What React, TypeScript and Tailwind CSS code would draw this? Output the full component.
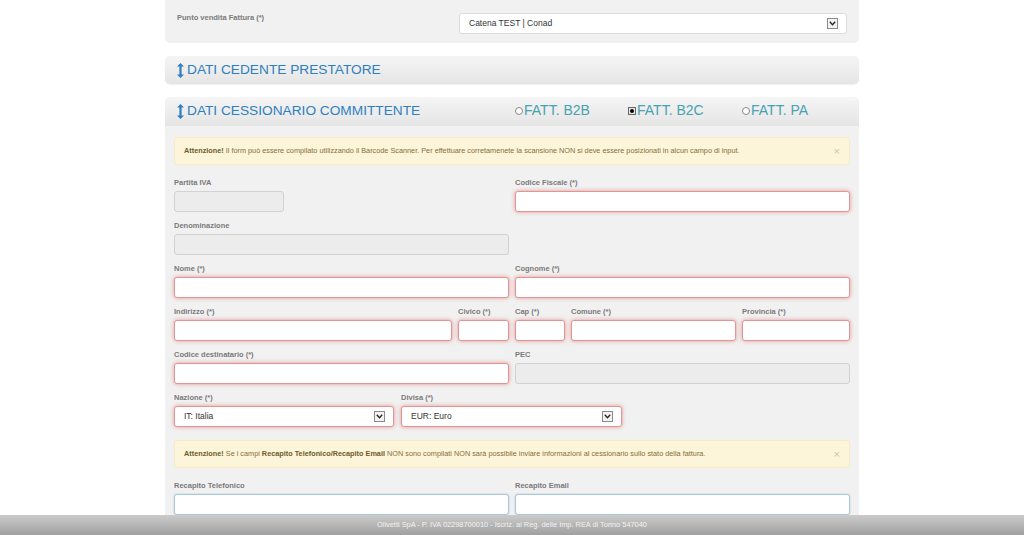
import React from "react";

const redInput =
  "h-[21px] w-full rounded-[3px] border border-[#e49494] bg-white shadow-[0_0_4px_rgba(222,90,90,0.6)]";
const grayInput = "h-[21px] w-full rounded-[3px] border border-[#d2d2d2] bg-[#ececec]";
const blueInput =
  "h-[21px] w-full rounded-[3px] border border-[#a8c6dc] bg-white shadow-[0_0_2px_rgba(110,160,200,0.45)]";

function Label({ children }: { children: React.ReactNode }) {
  return (
    <div className="mb-[3px] h-[10px] whitespace-nowrap text-[7.5px] font-bold leading-[10px] text-[#7a7a7a]">
      {children}
    </div>
  );
}

function Field({
  label,
  kind = "red",
  className = "",
}: {
  label: string;
  kind?: "red" | "gray" | "blue";
  className?: string;
}) {
  const cls = kind === "red" ? redInput : kind === "gray" ? grayInput : blueInput;
  return (
    <div className={className}>
      <Label>{label}</Label>
      <div className={cls} />
    </div>
  );
}

function Arrow() {
  return (
    <span className="flex h-[11px] w-[11px] items-center justify-center border border-[#8a8a8a] bg-[#f3f3f3]">
      <svg width="7" height="5" viewBox="0 0 7 5">
        <path d="M0.8 0.8 L3.5 3.8 L6.2 0.8" fill="none" stroke="#222" strokeWidth="1.3" />
      </svg>
    </span>
  );
}

function Select({ value, className = "" }: { value: string; className?: string }) {
  return (
    <div className={`flex h-[21px] items-center justify-between rounded-[3px] bg-white pl-[9px] pr-[8px] ${className}`}>
      <span className="text-[8.5px] text-[#333]">{value}</span>
      <Arrow />
    </div>
  );
}

function ResizeIcon() {
  return (
    <svg width="7" height="15" viewBox="0 0 7 15" className="mr-[3px]">
      <path d="M3.5 0 L7 3.6 H4.6 V11.4 H7 L3.5 15 L0 11.4 H2.4 V3.6 H0 Z" fill="#2f7fc0" />
    </svg>
  );
}

function Radio({ checked }: { checked?: boolean }) {
  if (checked)
    return (
      <span className="mr-[1px] flex h-[8px] w-[8px] items-center justify-center border border-[#666] bg-[#e8e8e8]">
        <span className="h-[4px] w-[4px] rounded-full bg-black" />
      </span>
    );
  return <span className="mr-[1px] h-[8px] w-[8px] rounded-full border border-[#888] bg-white" />;
}

function Alert({ children }: { children: React.ReactNode }) {
  return (
    <div className="flex h-[28px] items-center justify-between rounded-[3px] border border-[#f6ebc4] bg-[#fcf5d9] pl-[9px] pr-[9px] text-[7.3px] text-[#8a6d3b]">
      <span>{children}</span>
      <span className="text-[11px] leading-none text-[#cfc6b0]">×</span>
    </div>
  );
}

export default function App() {
  return (
    <div className="flex h-screen flex-col bg-white font-['Liberation_Sans',Arial,sans-serif]">
      <main className="flex-1 overflow-hidden">
        <div className="mx-auto w-[694px]">
          {/* punto vendita */}
          <div className="flex items-start rounded-b-[5px] bg-[#f1f1f1] pb-[9px] pl-[12px] pr-[12px] pt-[13px]">
            <div className="w-[282px] text-[7.5px] font-bold leading-[10px] text-[#7a7a7a]">
              Punto vendita Fattura (*)
            </div>
            <Select value="Catena TEST | Conad" className="flex-1 border border-[#dcdcdc]" />
          </div>

          {/* cedente */}
          <div className="mt-[13px] flex h-[28px] items-center rounded-[5px] bg-gradient-to-b from-[#f5f5f5] to-[#e5e5e5] pl-[12px] shadow-[0_1px_1px_rgba(0,0,0,0.06)]">
            <ResizeIcon />
            <span className="text-[13.7px] text-[#2f7fc0]">DATI CEDENTE PRESTATORE</span>
          </div>

          {/* cessionario */}
          <div className="mt-[13px] flex h-[29px] items-center rounded-t-[5px] bg-gradient-to-b from-[#f5f5f5] to-[#e5e5e5] pl-[12px]">
            <div className="flex w-[338px] items-center">
              <ResizeIcon />
              <span className="text-[13.7px] text-[#2f7fc0]">DATI CESSIONARIO COMMITTENTE</span>
            </div>
            <div className="flex -translate-y-[1px] items-center text-[14px] text-[#45a3b0]">
              <label className="flex w-[113px] items-center">
                <Radio />
                FATT. B2B
              </label>
              <label className="flex w-[114px] items-center">
                <Radio checked />
                FATT. B2C
              </label>
              <label className="flex items-center">
                <Radio />
                FATT. PA
              </label>
            </div>
          </div>

          <div className="bg-[#f1f1f1] px-[9px] pt-[11px] pb-[20px]">
            <Alert>
              <b className="text-[#6f5a2c]">Attenzione!</b> Il form può essere compilato utilizzando il Barcode
              Scanner. Per effettuare corretamenete la scansione NON si deve essere posizionati in alcun campo di
              input.
            </Alert>

            <div className="mt-[13px] grid grid-cols-2 gap-x-[6px]">
              <div className="mb-[9px]">
                <Label>Partita IVA</Label>
                <div className={`${grayInput} !w-[110px]`} />
              </div>
              <Field label="Codice Fiscale (*)" className="mb-[9px]" />

              <Field label="Denominazione" kind="gray" className="mb-[9px]" />
              <div />

              <Field label="Nome (*)" className="mb-[9px]" />
              <Field label="Cognome (*)" className="mb-[9px]" />
            </div>

            <div className="mb-[9px] grid grid-cols-[278px_51px_50px_165px_108px] gap-x-[6px]">
              <Field label="Indirizzo (*)" />
              <Field label="Civico (*)" />
              <Field label="Cap (*)" />
              <Field label="Comune (*)" />
              <Field label="Provincia (*)" />
            </div>

            <div className="mb-[9px] grid grid-cols-2 gap-x-[6px]">
              <Field label="Codice destinatario (*)" />
              <Field label="PEC" kind="gray" />
            </div>

            <div className="mb-[13px] flex gap-x-[7px]">
              <div className="w-[220px]">
                <Label>Nazione (*)</Label>
                <Select value="IT: Italia" className="border border-[#e49494] shadow-[0_0_4px_rgba(222,90,90,0.6)]" />
              </div>
              <div className="w-[221px]">
                <Label>Divisa (*)</Label>
                <Select value="EUR: Euro" className="border border-[#e49494] shadow-[0_0_4px_rgba(222,90,90,0.6)]" />
              </div>
            </div>

            <Alert>
              <b className="text-[#6f5a2c]">Attenzione!</b> Se i campi{" "}
              <b className="text-[#6f5a2c]">Recapito Telefonico/Recapito Email</b> NON sono compilati NON sarà
              possibile inviare informazioni al cessionario sullo stato della fattura.
            </Alert>

            <div className="mt-[13px] grid grid-cols-2 gap-x-[6px]">
              <Field label="Recapito Telefonico" kind="blue" />
              <Field label="Recapito Email" kind="blue" />
            </div>
          </div>
        </div>
      </main>
      <footer className="flex h-[20px] shrink-0 items-center justify-center bg-gradient-to-b from-[#cbcbcb] to-[#a0a0a0] text-[7.4px] text-[#f2f2f2]">
        Olivetti SpA - P. IVA 02298700010 - Iscriz. al Reg. delle Imp. REA di Torino 547040
      </footer>
    </div>
  );
}
